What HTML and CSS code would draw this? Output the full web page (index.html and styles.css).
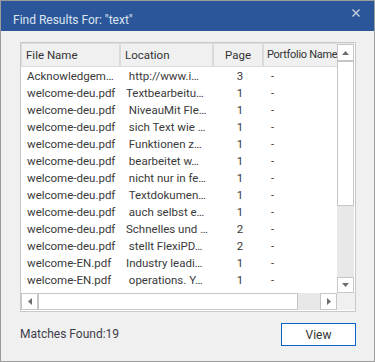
FILE: index.html
```html
<!DOCTYPE html>
<html lang="en">
<head>
  <meta charset="UTF-8">
  <title>Find Results</title>
  <link rel="stylesheet" href="styles.css">
</head>
<body>
  <div class="dialog">
    <div class="titlebar">
      <span class="title">Find Results For: "text"</span>
      <svg class="close" viewBox="0 0 8 8" width="8" height="8">
        <path d="M0.5 0.5 L7.5 7.5 M7.5 0.5 L0.5 7.5" stroke="#c9d1de" stroke-width="1.4"/>
      </svg>
    </div>
    <div class="content">
      <div class="listview">
        <div class="list-main">
          <div class="list-header">
            <div class="col col-file">File Name</div>
            <div class="col col-loc">Location</div>
            <div class="col col-page">Page</div>
            <div class="col col-port">Portfolio Name</div>
          </div>
          <div class="list-rows">
            <div class="row"><span class="c-file">Acknowledgem…</span><span class="c-loc"> http://www.i…</span><span class="c-page">3</span><span class="c-port">-</span></div>
            <div class="row"><span class="c-file">welcome-deu.pdf</span><span class="c-loc">Textbearbeitu…</span><span class="c-page">1</span><span class="c-port">-</span></div>
            <div class="row"><span class="c-file">welcome-deu.pdf</span><span class="c-loc"> NiveauMit Fle…</span><span class="c-page">1</span><span class="c-port">-</span></div>
            <div class="row"><span class="c-file">welcome-deu.pdf</span><span class="c-loc"> sich Text wie …</span><span class="c-page">1</span><span class="c-port">-</span></div>
            <div class="row"><span class="c-file">welcome-deu.pdf</span><span class="c-loc"> Funktionen z…</span><span class="c-page">1</span><span class="c-port">-</span></div>
            <div class="row"><span class="c-file">welcome-deu.pdf</span><span class="c-loc"> bearbeitet w…</span><span class="c-page">1</span><span class="c-port">-</span></div>
            <div class="row"><span class="c-file">welcome-deu.pdf</span><span class="c-loc"> nicht nur in fe…</span><span class="c-page">1</span><span class="c-port">-</span></div>
            <div class="row"><span class="c-file">welcome-deu.pdf</span><span class="c-loc"> Textdokumen…</span><span class="c-page">1</span><span class="c-port">-</span></div>
            <div class="row"><span class="c-file">welcome-deu.pdf</span><span class="c-loc"> auch selbst e…</span><span class="c-page">1</span><span class="c-port">-</span></div>
            <div class="row"><span class="c-file">welcome-deu.pdf</span><span class="c-loc">Schnelles und …</span><span class="c-page">2</span><span class="c-port">-</span></div>
            <div class="row"><span class="c-file">welcome-deu.pdf</span><span class="c-loc"> stellt FlexiPD…</span><span class="c-page">2</span><span class="c-port">-</span></div>
            <div class="row"><span class="c-file">welcome-EN.pdf</span><span class="c-loc">Industry leadi…</span><span class="c-page">1</span><span class="c-port">-</span></div>
            <div class="row"><span class="c-file">welcome-EN.pdf</span><span class="c-loc"> operations. Y…</span><span class="c-page">1</span><span class="c-port">-</span></div>
          </div>
        </div>
        <div class="vscroll">
          <div class="sb-btn sb-up">
            <svg viewBox="0 0 7 4" width="7" height="4"><polygon points="0,4 7,4 3.5,0" fill="#6d6d6d"/></svg>
          </div>
          <div class="sb-thumb v-thumb"></div>
          <div class="sb-track"></div>
          <div class="sb-btn sb-down">
            <svg viewBox="0 0 7 4" width="7" height="4"><polygon points="0,0 7,0 3.5,4" fill="#6d6d6d"/></svg>
          </div>
        </div>
        <div class="hscroll">
          <div class="sb-btn sb-left">
            <svg viewBox="0 0 4 7" width="4" height="7"><polygon points="4,0 4,7 0,3.5" fill="#6d6d6d"/></svg>
          </div>
          <div class="sb-thumb h-thumb"></div>
          <div class="sb-track"></div>
          <div class="sb-btn sb-right">
            <svg viewBox="0 0 4 7" width="4" height="7"><polygon points="0,0 0,7 4,3.5" fill="#6d6d6d"/></svg>
          </div>
        </div>
        <div class="corner"></div>
      </div>
      <div class="footer">
        <span class="matches">Matches Found:19</span>
        <button class="view-btn">View</button>
      </div>
    </div>
  </div>
</body>
</html>
```

FILE: styles.css
```css
body {
  margin: 0;
  font-family: "Segoe UI", Roboto, sans-serif;
  font-size: 11.5px;
  color: #3a3a3a;
  background: #f0f0f0;
}
.dialog {
  width: 375px;
  height: 362px;
  box-sizing: border-box;
  border: 1px solid #9b9b9b;
  background: #f0f0f0;
  display: flex;
  flex-direction: column;
}
.titlebar {
  height: 30px;
  background: #2b579a;
  display: flex;
  align-items: center;
  justify-content: space-between;
  padding: 0 14px 0 12px;
  flex-shrink: 0;
}
.title {
  color: #dde4ef;
  font-size: 12px;
  margin-top: 7px;
}
.close {
  align-self: flex-start;
  margin-top: 8px;
}
.content {
  padding: 11px 18px 0 19px;
}
.listview {
  height: 270px;
  box-sizing: border-box;
  border: 1px solid #c9c9c9;
  background: #fff;
  display: grid;
  grid-template-columns: 316px 18px;
  grid-template-rows: 250px 17px;
}
.list-main {
  overflow: hidden;
  display: flex;
  flex-direction: column;
}
.list-header {
  height: 24px;
  box-sizing: border-box;
  display: flex;
  background: #f0f0f0;
  border-bottom: 1px solid #dcdcdc;
  flex-shrink: 0;
}
.col {
  box-sizing: border-box;
  padding: 0 4px;
  line-height: 22px;
  border-right: 2px solid #dadada;
  white-space: nowrap;
  overflow: hidden;
  color: #333;
  border-top: 1px solid #dcdcdc;
}
.col-file { width: 100px; border-left: 1px solid #dcdcdc; }
.col-loc { width: 93px; }
.col-page { width: 50px; text-align: center; }
.col-port { flex: 1; border-right: none; padding: 0 0 0 3px; font-size: 11px; letter-spacing: -0.3px; }
.list-rows {
  padding-top: 1px;
}
.row {
  display: flex;
  height: 17px;
  line-height: 17px;
  white-space: pre;
}
.row span {
  overflow: hidden;
}
.c-file { width: 99px; padding-left: 6px; box-sizing: border-box; }
.c-loc { width: 95px; padding-left: 6px; box-sizing: border-box; }
.c-page { width: 50px; text-align: center; box-sizing: border-box; }
.c-port { padding-left: 6px; }
.vscroll {
  grid-row: 1;
  grid-column: 2;
  display: flex;
  flex-direction: column;
  padding-top: 1px;
  width: 17px;
  background: #e8e8e8;
}
.hscroll {
  grid-row: 2;
  grid-column: 1;
  display: flex;
  background: #e8e8e8;
}
.corner {
  grid-row: 2;
  grid-column: 2;
  background: #f0f0f0;
}
.sb-btn {
  box-sizing: border-box;
  border: 1px solid #c6c6c6;
  background: #fff;
  display: flex;
  align-items: center;
  justify-content: center;
  flex-shrink: 0;
}
.sb-up { height: 17px; }
.sb-down { height: 16px; }
.sb-left, .sb-right { width: 17px; }
.sb-thumb {
  box-sizing: border-box;
  border: 1px solid #c6c6c6;
  background: #fff;
  flex-shrink: 0;
}
.v-thumb { height: 145px; }
.h-thumb { width: 260px; }
.sb-track { flex: 1; }
.footer {
  display: flex;
  justify-content: space-between;
  align-items: center;
  padding-top: 11px;
}
.matches {
  font-size: 12px;
  color: #3d3d4a;
  margin-top: -2px;
}
.view-btn {
  width: 75px;
  height: 23px;
  border: 1px solid #0a64c8;
  background: #fff;
  font-family: "Segoe UI", Roboto, sans-serif;
  font-size: 12px;
  color: #333;
  padding: 0;
}
```
